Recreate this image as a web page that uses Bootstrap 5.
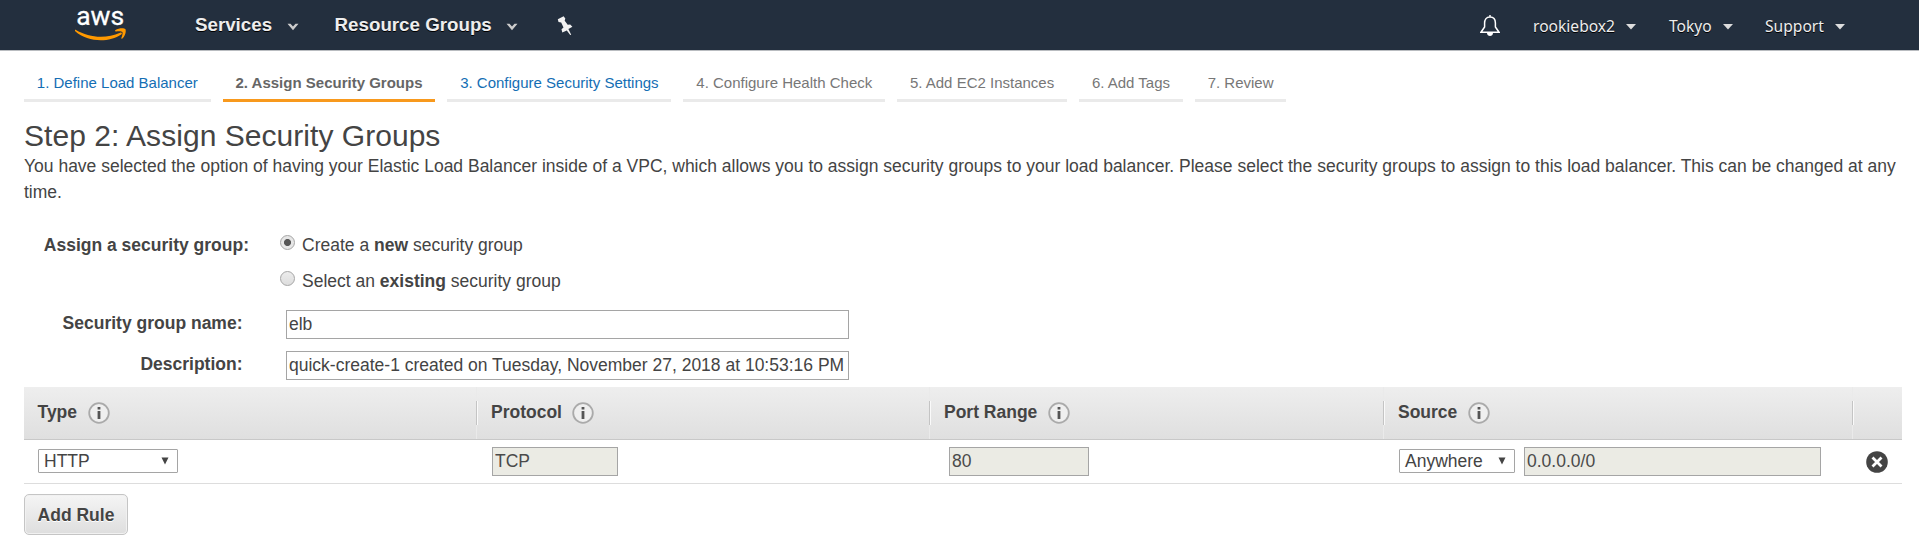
<!DOCTYPE html>
<html lang="en">
<head>
<meta charset="utf-8">
<title>Assign Security Groups</title>
<link href="https://cdn.jsdelivr.net/npm/bootstrap@5.3.0/dist/css/bootstrap.min.css" rel="stylesheet">
<style>
body{font-family:"Liberation Sans",Arial,sans-serif;font-size:17.5px;line-height:26px;color:#444;background:#fff;overflow:hidden}
svg{display:block;flex:none}
.topbar{height:51px;background:#232f3e;border-bottom:1px solid #b9bcc0;color:#eee;padding:0 0 0 75px}
.mainlink{font-size:18.75px;font-weight:700;line-height:50px;height:50px;color:#eee;text-shadow:0 1px 0 #000;letter-spacing:-.01px}
.mainlink svg{margin:4px 0 0 14.500px}
.sidelink{font-family:"Noto Sans","Open Sans",sans-serif;font-size:15.6px;color:#eee;text-shadow:0 1px 0 #000;line-height:20px;white-space:nowrap}
.sidelink svg{margin:1px 0 0 11px}
.logo{margin-right:69px}
.steps{padding:19px 0 0 24px;gap:12px;font-size:15px;line-height:26px}
.step{border-bottom:3px solid #eaeaea;height:32px;padding:0 12.85px;color:#777;white-space:nowrap}
.step.done{color:#146eb4}
.step.current{color:#666;font-weight:700;border-color:#f8991d}
h1.title{font-size:30px;line-height:36px;font-weight:400;margin:16px 0 -1px;color:#444;letter-spacing:.04px}
.intro{margin:0;line-height:26px}
.formrow{height:36px}
.lbl{font-weight:700;text-align:right;flex:none}
.rad{appearance:none;width:15px;height:15px;border:1px solid #a5a5a5;border-radius:50%;background:linear-gradient(#ececec,#ddd);margin:3px 7px 0 0;display:block;flex:none}
.rad:checked{background:radial-gradient(circle,#555 0 3.1px,#e6e6e6 3.9px)}
.txt{border:1px solid #a5a5a5;border-radius:0;height:29px;padding:0 2px;background:#fff;color:#444;font-size:17.5px;line-height:27px;display:block;outline:0;font-family:inherit}
.txt:disabled{background:#ebebe4;color:#4a4a4a;opacity:1}
.sel{border:1px solid #a5a5a5;border-radius:1px;height:24px;margin-top:-1px;padding:0 8px 0 5px;font-size:17.5px;line-height:20px;background:#fff}
.rules{margin-right:17px}
.cols{display:grid;grid-template-columns:452px 453px 454px 469px 1fr}
.headrow{height:53px;background:linear-gradient(#eee,#dfdfdf);border-bottom:1px solid #c8c8c8;font-weight:700}
.headcell{padding-left:14px;position:relative;gap:10.5px}
.headcell:first-child{padding-left:13.5px}
.headcell+.headcell::before{content:"";position:absolute;left:-1px;top:14px;height:24px;width:2px;background:linear-gradient(90deg,#c4c4c4 50%,#fafafa 50%)}
.headcell+.headcell{border-left:1px solid #eaeaea}
.headcell span{margin-top:-2px}
.bodyrow{height:44px;border-bottom:1px solid #ddd}
.addrule{width:104px;height:41px;margin-top:10px;border:1px solid #c5c5c5;border-radius:5px;background:linear-gradient(#f5f5f5,#dedede);box-shadow:inset 0 0 0 1px #f1f1f1;font-weight:700;color:#444;font-size:17.5px;line-height:36px;padding:0;display:block;text-shadow:0 1px 0 #fff}
</style>
</head>
<body>
<svg width="0" height="0" class="position-absolute">
 <symbol id="info" viewBox="0 0 22 22"><circle cx="11" cy="11" r="9.8" fill="#efefef" stroke="#aaa" stroke-width="1.8"/><path d="M9.6 5h2.8v2.5H9.6zM9.6 9h2.8v8H9.6z" fill="#555"/></symbol>
 <symbol id="chev" viewBox="0 0 12 8"><path d="M.5.800h3L6 3.500 8.500.800h3L6 7.200z" fill="#ccc"/></symbol>
 <symbol id="caret" viewBox="0 0 10 6"><path d="M0 0h10L5 5.6z" fill="#ddd"/></symbol>
 <symbol id="drop" viewBox="0 0 8 8"><path d="M.5.5h7L4 7.500z" fill="#444"/></symbol>
</svg>
<header class="topbar d-flex align-items-start">
 <svg class="logo" width="51" height="50" viewBox="0 0 51 50"><text x="1.2" y="25.300" font-family="Roboto,sans-serif" font-size="26.500" fill="#fff" stroke="#fff" stroke-width=".3" textLength="48" lengthAdjust="spacingAndGlyphs">aws</text><path d="M.6 29.800c14 8.500 31 9 44.500 2.900 1.500-.6 2.500.6 1.200 1.700C34 42.800 13 42.500 .2 31.300c-.8-.8-.4-2 .4-1.500z" fill="#f90"/><path d="M40.500 30c3-2.100 8.500-2.400 9.800-1 1.300 1.700-.2 7.200-2.900 9.500-.8.600-1.400.2-1-.7.900-2.200 1.500-4.900 1-5.800-.8-.900-3.500-.9-6.300-.6-1.100.1-1.500-.7-.6-1.400z" fill="#f90"/></svg>
 <a class="mainlink d-flex align-items-center text-decoration-none">Services<svg width="12" height="8"><use href="#chev"/></svg></a>
 <a class="mainlink d-flex align-items-center text-decoration-none" style="margin-left:36px">Resource Groups<svg width="12" height="8"><use href="#chev"/></svg></a>
 <svg style="margin:16px 0 0 39px" width="17" height="19" viewBox="0 0 17 19"><path d="M.8 3.200 6.600.3 8.300 2.600 7.700 4.700l3 4.100 2.500-.2 2.200 2.200-4 2.300 2.800 5.600-1 .3-3.400-4.600-4.500 2-.8-3.200 2-1.800-2.300-4.900L1.500 6z" fill="#f2f2f2"/></svg>
 <svg class="ms-auto" style="margin-top:15px" width="20" height="22" viewBox="0 0 20 22"><path d="M10 2C6 2 4.600 5 4.600 8v4L1 17.200h18L15.400 12V8C15.400 5 14 2 10 2zM10 0v2" fill="none" stroke="#fff" stroke-width="1.5"/><path d="M7 18h6c0 4-6 4-6 0z" fill="#fff"/></svg>
 <nav class="d-flex" style="margin:16px 74px 0 33px">
  <span class="sidelink d-flex align-items-center" style="width:136px">rookiebox2<svg width="10" height="6"><use href="#caret"/></svg></span>
  <span class="sidelink d-flex align-items-center" style="width:96px">Tokyo<svg width="10" height="6"><use href="#caret"/></svg></span>
  <span class="sidelink d-flex align-items-center" style="width:80px">Support<svg width="10" height="6"><use href="#caret"/></svg></span>
 </nav>
</header>
<nav class="steps d-flex">
 <div class="step done">1. Define Load Balancer</div>
 <div class="step current">2. Assign Security Groups</div>
 <div class="step done">3. Configure Security Settings</div>
 <div class="step">4. Configure Health Check</div>
 <div class="step">5. Add EC2 Instances</div>
 <div class="step">6. Add Tags</div>
 <div class="step">7. Review</div>
</nav>
<main style="padding-left:24px">
 <h1 class="title">Step 2: Assign Security Groups</h1>
 <p class="intro">You have selected the option of having your Elastic Load Balancer inside of a VPC, which allows you to assign security groups to your load balancer. Please select the security groups to assign to this load balancer. This can be changed at any time.</p>
 <div class="d-flex" style="margin-top:27px">
  <div class="lbl" style="width:225px">Assign a security group:</div>
  <div style="margin-left:31px">
   <label class="formrow d-flex align-items-start"><input class="rad" type="radio" name="group" checked><span>Create a <b>new</b> security group</span></label>
   <label class="formrow d-flex align-items-start"><input class="rad" type="radio" name="group"><span>Select an <b>existing</b> security group</span></label>
  </div>
 </div>
 <div class="d-flex align-items-start" style="margin-top:6px;height:41px"><div class="lbl" style="width:218.5px">Security group name:</div><input class="txt" style="width:563px;margin-left:43.5px" value="elb"></div>
 <div class="d-flex align-items-start" style="height:36px"><div class="lbl" style="width:218.5px">Description:</div><input class="txt" style="width:563px;margin-left:43.5px" value="quick-create-1 created on Tuesday, November 27, 2018 at 10:53:16 PM"></div>
 <section class="rules">
  <div class="headrow cols">
   <div class="headcell d-flex align-items-center"><span>Type</span><svg width="22" height="22"><use href="#info"/></svg></div>
   <div class="headcell d-flex align-items-center"><span>Protocol</span><svg width="22" height="22"><use href="#info"/></svg></div>
   <div class="headcell d-flex align-items-center"><span>Port Range</span><svg width="22" height="22"><use href="#info"/></svg></div>
   <div class="headcell d-flex align-items-center"><span>Source</span><svg width="22" height="22"><use href="#info"/></svg></div>
   <div class="headcell"></div>
  </div>
  <div class="bodyrow cols align-items-center">
   <div style="padding-left:14px"><div class="sel d-flex align-items-center justify-content-between" style="width:140px">HTTP<svg width="8" height="8"><use href="#drop"/></svg></div></div>
   <div style="padding-left:16px"><input class="txt" style="width:126px" value="TCP" disabled></div>
   <div style="padding-left:20px"><input class="txt" style="width:140px" value="80" disabled></div>
   <div class="d-flex align-items-center" style="padding-left:16px;gap:9px"><div class="sel d-flex align-items-center justify-content-between" style="width:116px">Anywhere<svg width="8" height="8"><use href="#drop"/></svg></div><input class="txt" style="width:297px" value="0.0.0.0/0" disabled></div>
   <div style="padding-left:14px;padding-top:1px"><svg width="22" height="22" viewBox="0 0 22 22"><circle cx="11" cy="11" r="10.800" fill="#444"/><path d="m6.500 6.500 9 9m0-9-9 9" stroke="#fff" stroke-width="2.800"/></svg></div>
  </div>
 </section>
 <button class="addrule">Add Rule</button>
</main>
<script src="https://cdn.jsdelivr.net/npm/bootstrap@5.3.0/dist/js/bootstrap.bundle.min.js"></script>
</body>
</html>
